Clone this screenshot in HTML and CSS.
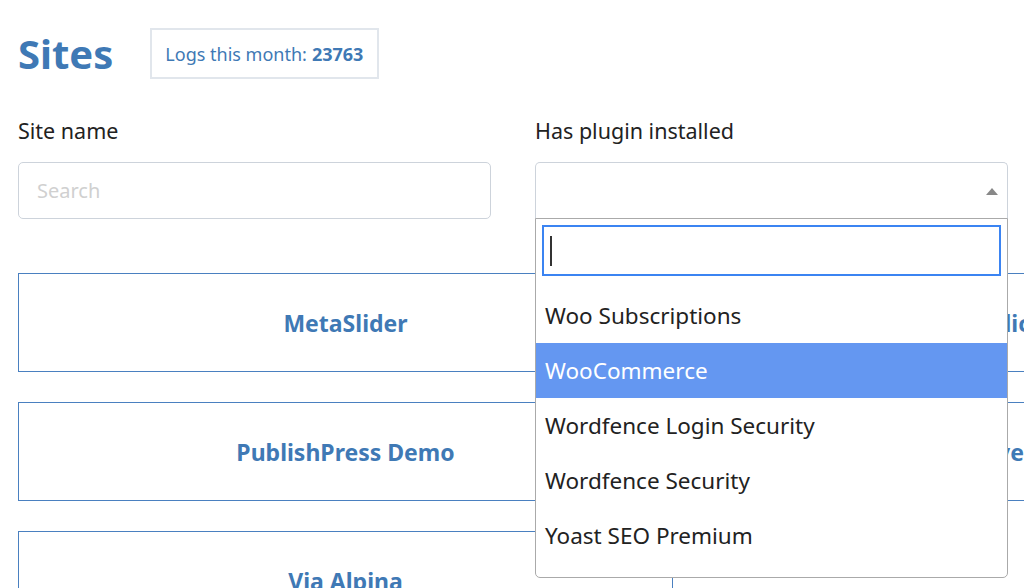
FILE: index.html
```html
<!DOCTYPE html>
<html lang="en">
<head>
  <meta charset="UTF-8" />
  <meta name="viewport" content="width=device-width, initial-scale=1.0"/>
  <title>Sites</title>
  <link rel="stylesheet" href="styles.css">
</head>
<body>
  <div class="page">
    <div class="header">
      <h1 class="title">Sites</h1>
      <div class="logs">Logs this month: <strong>23763</strong></div>
    </div>

    <div class="filters">
      <div class="field">
        <label class="label">Site name</label>
        <input class="search" type="text" placeholder="Search">
      </div>
      <div class="field">
        <label class="label">Has plugin installed</label>
        <div class="select open">
          <div class="select-box">
            <span class="arrow"></span>
          </div>
          <!-- dropdown is open -->
          <div class="dropdown">
            <div class="dropdown-search">
              <span class="caret"></span>
            </div>
            <ul class="options">
              <li class="option">Woo Subscriptions</li>
              <li class="option active">WooCommerce</li>
              <li class="option">Wordfence Login Security</li>
              <li class="option">Wordfence Security</li>
              <li class="option">Yoast SEO Premium</li>
            </ul>
          </div>
        </div>
      </div>
    </div>

    <div class="sites">
      <a class="site" href="#">MetaSlider</a>
      <a class="site" href="#">Republic Demo</a>
      <a class="site" href="#">PublishPress Demo</a>
      <a class="site" href="#">Archive Demo</a>
      <a class="site" href="#">Via Alpina</a>
    </div>
  </div>
</body>
</html>
```

FILE: styles.css
```css
body {
  margin: 0;
  font-family: "Noto Sans", "Open Sans", sans-serif;
  color: #222;
  background: #fff;
  overflow: hidden;
}
.page {
  padding: 28px 16px 0 18px;
  width: 990px;
}

.header {
  display: flex;
  align-items: center;
  gap: 37px;
  height: 51px;
}
.title {
  margin: 0;
  font-size: 40px;
  font-weight: 700;
  color: #3f79b5;
  line-height: 51px;
}
.logs {
  box-sizing: border-box;
  height: 51px;
  padding: 0 14px 0 13px;
  display: flex;
  align-items: center;
  gap: 5px;
  border: 2px solid #e1e6ec;
  font-size: 18px;
  color: #3f79b5;
}
.logs strong {
  font-weight: 700;
}

.filters {
  margin-top: 38px;
  display: grid;
  grid-template-columns: 1fr 1fr;
  gap: 44px;
}
.label {
  display: block;
  font-size: 21.5px;
  line-height: 28px;
  margin-bottom: 17px;
  color: #222;
}
.search {
  box-sizing: border-box;
  width: 100%;
  height: 57px;
  padding: 0 18px;
  border: 1px solid #cdd3db;
  border-radius: 5px;
  font-family: inherit;
  font-size: 20px;
  outline: none;
}
.search::placeholder {
  color: #d0d0d0;
}

.select {
  position: relative;
}
.select-box {
  box-sizing: border-box;
  height: 57px;
  border: 1px solid #cdd3db;
  border-radius: 5px 5px 0 0;
  border-bottom: none;
  display: flex;
  align-items: center;
  justify-content: flex-end;
  padding-right: 9px;
}
.arrow {
  width: 0;
  height: 0;
  border-left: 6px solid transparent;
  border-right: 6px solid transparent;
  border-bottom: 7px solid #888;
}
.dropdown {
  position: absolute;
  top: 56px;
  left: 0;
  right: 0;
  z-index: 2;
  background: #fff;
  border: 1px solid #aaa;
  border-radius: 0 0 5px 5px;
  box-sizing: border-box;
  padding-bottom: 14px;
}
.dropdown-search {
  margin: 6px 6px 0 6px;
  height: 51px;
  box-sizing: border-box;
  border: 2px solid #3b84f2;
  display: flex;
  align-items: center;
  padding-left: 6px;
}
.caret {
  width: 2px;
  height: 30px;
  background: #333;
}
.options {
  list-style: none;
  margin: 12px 0 0;
  padding: 0;
}
.option {
  height: 55px;
  line-height: 55px;
  padding-left: 9px;
  font-size: 22.5px;
  color: #222;
}
.option.active {
  background: #6497f1;
  color: #fff;
}

.sites {
  margin-top: 54px;
  display: grid;
  grid-template-columns: 655px 655px;
  column-gap: 17px;
  row-gap: 30px;
}
.site {
  box-sizing: border-box;
  height: 99px;
  border: 1px solid #4a80c0;
  display: flex;
  align-items: center;
  justify-content: center;
  font-size: 23px;
  font-weight: 700;
  color: #3f79b5;
  text-decoration: none;
}
```
